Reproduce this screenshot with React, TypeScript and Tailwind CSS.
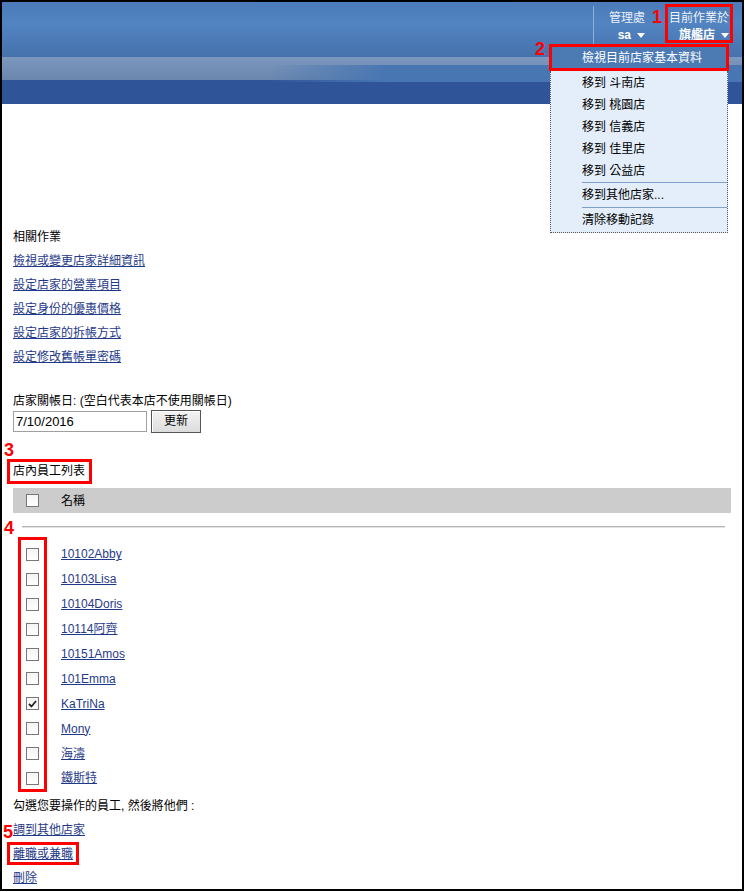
const links = [
  '檢視或變更店家詳細資訊',
  '設定店家的營業項目',
  '設定身份的優惠價格',
  '設定店家的拆帳方式',
  '設定修改舊帳單密碼',
]

const employees = [
  { name: '10102Abby', checked: false },
  { name: '10103Lisa', checked: false },
  { name: '10104Doris', checked: false },
  { name: '10114阿齊', checked: false },
  { name: '10151Amos', checked: false },
  { name: '101Emma', checked: false },
  { name: 'KaTriNa', checked: true },
  { name: 'Mony', checked: false },
  { name: '海濤', checked: false },
  { name: '鐵斯特', checked: false },
]

const stores = ['斗南店', '桃園店', '信義店', '佳里店', '公益店']

const Caret = () => (
  <svg width="8" height="5" viewBox="0 0 8 5" className="ml-[6px] inline-block">
    <path d="M0 0 L8 0 L4 5 Z" fill="#ffffff" />
  </svg>
)

const CheckBox = ({ checked }: { checked: boolean }) => (
  <div className="w-[13px] h-[13px] border border-[#777] bg-[linear-gradient(to_bottom,#f4f4f4,#ffffff)] flex items-center justify-center shrink-0">
    {checked && (
      <svg width="9" height="8" viewBox="0 0 9 8">
        <path d="M1 4 L3.5 6.5 L8 1" stroke="#222" strokeWidth="1.8" fill="none" />
      </svg>
    )}
  </div>
)

const Mark = ({ n, className }: { n: string; className: string }) => (
  <div className={`absolute text-[18px] leading-[18px] font-bold text-[#ff0000] ${className}`}>{n}</div>
)

const App = () => {
  return (
    <div className="relative w-[745px] h-[892px] bg-white font-['Liberation_Sans','Noto_Sans_CJK_TC',sans-serif] text-[12px] text-black">
      <div className="w-[744px] h-[891px] border-2 border-black overflow-hidden">
        {/* header */}
        <div className="h-[102px] flex justify-end pr-[13px] [background:linear-gradient(100deg,transparent_36%,#4876b2_52%)_0_63px/100%_17px_no-repeat,linear-gradient(to_bottom,#4b7cb9_0px,#5284c2_22px,#4671ac_55px,#7c98be_55px,#6a86ad_78px,#2f5598_78px,#2f5598_102px)]">
          <div className="mt-[4px] w-px h-[46px] bg-[#8fafd8]" />
          <div className="ml-[15px] pt-[8px] leading-[17px] text-right text-[#e8eef8]">
            <div>管理處</div>
            <div className="font-bold text-white flex items-center justify-end">
              sa
              <Caret />
            </div>
          </div>
          <div className="ml-[24px] pt-[8px] leading-[17px] text-right text-[#eef3fa]">
            <div>目前作業於</div>
            <div className="font-bold text-white flex items-center justify-end">
              旗艦店
              <Caret />
            </div>
          </div>
        </div>

        {/* body */}
        <div className="pl-[11px] pr-[11px]">
          <div className="mt-[121px] leading-[24px]">相關作業</div>
          <div className="flex flex-col items-start">
            {links.map((l) => (
              <a key={l} className="leading-[24px] text-[#1f3a88] underline">
                {l}
              </a>
            ))}
          </div>

          <div className="mt-[24px] leading-[16px]">店家關帳日: (空白代表本店不使用關帳日)</div>
          <div className="mt-[1px] flex items-center gap-[4px] h-[23px]">
            <div className="w-[134px] h-[21px] border border-[#a0a0a0] bg-white text-[13px] leading-[19px] pl-[2px]">7/10/2016</div>
            <button className="w-[50px] h-[23px] border border-[#555] bg-[linear-gradient(to_bottom,#f3f3f3,#dcdcdc)] text-[12px] leading-[21px] text-center shadow-[inset_1px_1px_0_#fff]">
              更新
            </button>
          </div>

          <div className="mt-[30px] leading-[16px]">店內員工列表</div>

          <div className="mt-[9px] h-[25px] bg-[#cccccc] flex items-center pl-[13px]">
            <CheckBox checked={false} />
            <span className="ml-[22px]">名稱</span>
          </div>

          <div className="mt-[13px] ml-[9px] mr-[6px] border-t border-b border-t-[#b4b4b4] border-b-[#e2e2e2]" />

          <div className="mt-[14px]">
            {employees.map((e) => (
              <div key={e.name} className="h-[24.9px] flex items-center pl-[13px]">
                <CheckBox checked={e.checked} />
                <a className="ml-[22px] text-[#1f3a88] underline">{e.name}</a>
              </div>
            ))}
          </div>

          <div className="mt-[3px] leading-[24px]">勾選您要操作的員工, 然後將他們 :</div>
          <div className="flex flex-col items-start">
            <a className="leading-[24px] text-[#1f3a88] underline">調到其他店家</a>
            <a className="leading-[24px] text-[#1f3a88] underline">離職或兼職</a>
            <a className="leading-[24px] text-[#1f3a88] underline">刪除</a>
          </div>
        </div>
      </div>

      {/* dropdown menu */}
      <div className="absolute left-[549px] top-[44px] w-[180px]">
        <div className="h-[27px] border-[3px] border-[#ff0000] bg-[#4c7ab3] text-white flex items-center pl-[30px]">
          檢視目前店家基本資料
        </div>
        <div className="mx-[1px] h-[162px] border border-t-0 border-dotted border-[#555] bg-[#e4eefa] pt-[1px]">
          {stores.map((s) => (
            <div key={s} className="h-[22px] leading-[22px] pl-[31px]">
              移到 {s}
            </div>
          ))}
          <div className="ml-[31px] h-px bg-[#7f9fcc]" />
          <div className="h-[24px] leading-[24px] pl-[31px]">移到其他店家...</div>
          <div className="ml-[31px] h-px bg-[#7f9fcc]" />
          <div className="h-[24px] leading-[24px] pl-[31px]">清除移動記錄</div>
        </div>
      </div>

      {/* annotations */}
      <div className="absolute left-[665px] top-[4px] w-[68px] h-[39px] border-[3px] border-[#ff0000]" />
      <Mark n="1" className="left-[652px] top-[8px]" />
      <Mark n="2" className="left-[535px] top-[40px]" />
      <Mark n="3" className="left-[4px] top-[441px]" />
      <div className="absolute left-[7px] top-[459px] w-[85px] h-[25px] border-[3px] border-[#ff0000]" />
      <Mark n="4" className="left-[4px] top-[519px]" />
      <div className="absolute left-[18px] top-[537px] w-[29px] h-[255px] border-[3px] border-[#ff0000]" />
      <Mark n="5" className="left-[3px] top-[823px]" />
      <div className="absolute left-[7px] top-[842px] w-[72px] h-[23px] border-[3px] border-[#ff0000]" />
    </div>
  )
}

export default App
